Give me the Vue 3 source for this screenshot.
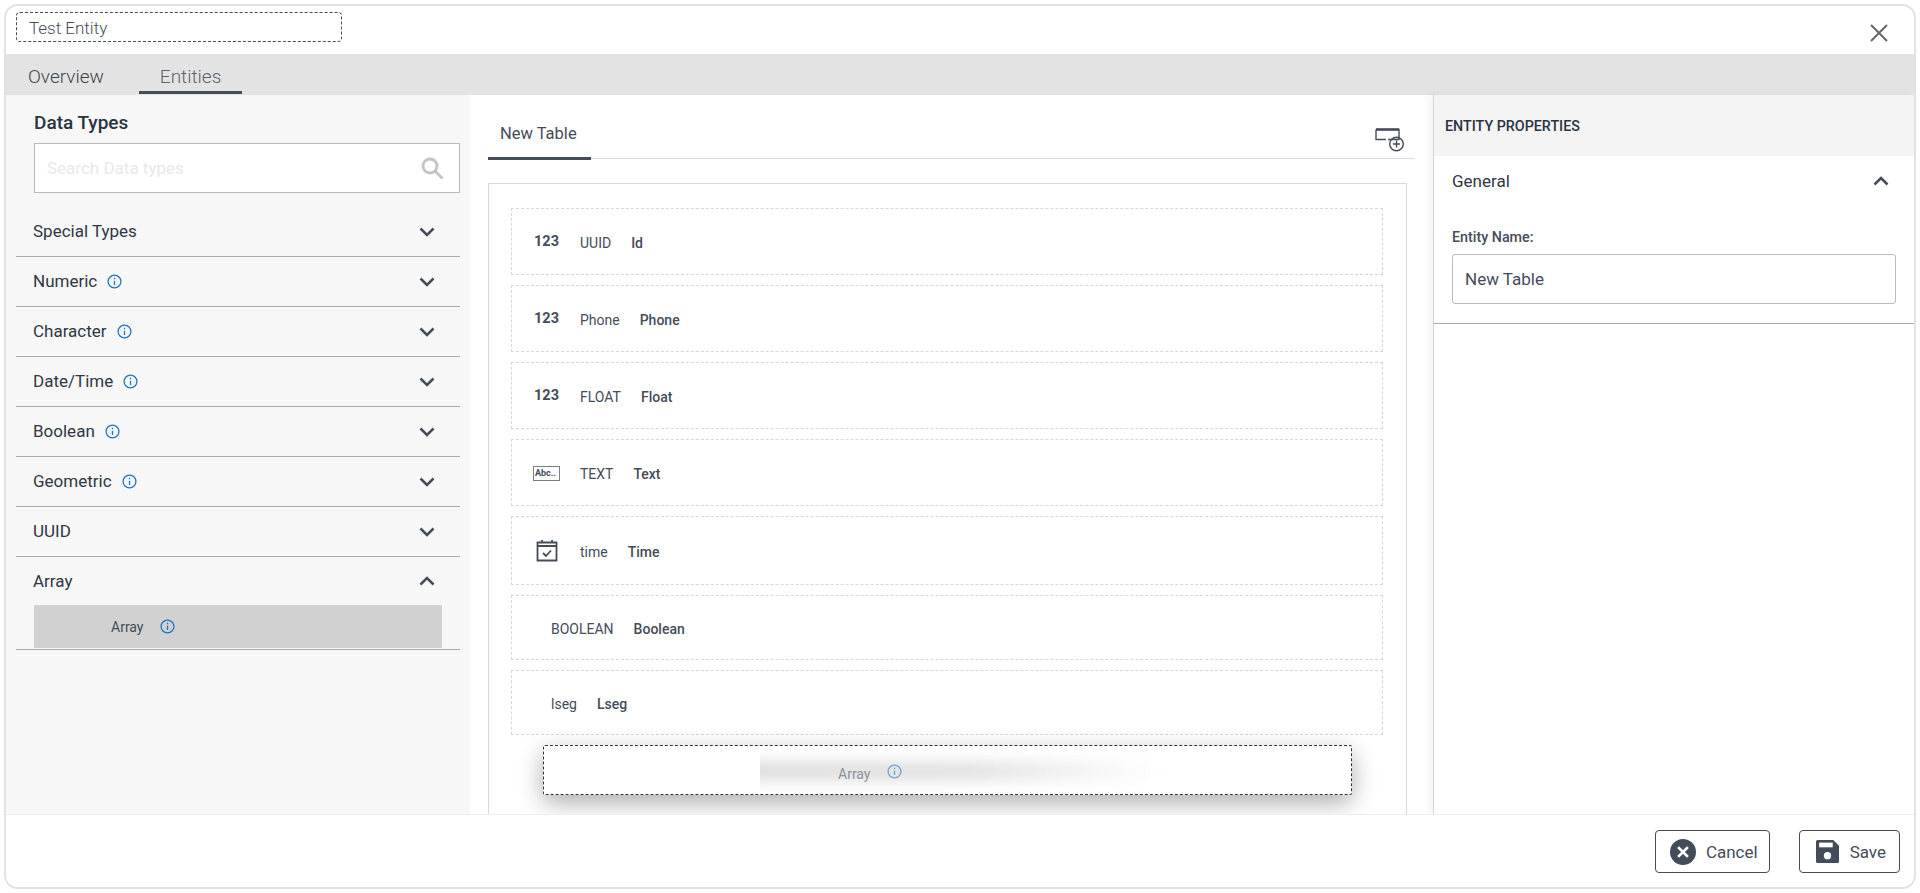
<script setup>
const groups = [
  { name: 'Special Types' },
  { name: 'Numeric', info: true },
  { name: 'Character', info: true },
  { name: 'Date/Time', info: true },
  { name: 'Boolean', info: true },
  { name: 'Geometric', info: true },
  { name: 'UUID' },
]

const fields = [
  { icon: 'num', type: 'UUID', name: 'Id', height: 67 },
  { icon: 'num', type: 'Phone', name: 'Phone', height: 67 },
  { icon: 'num', type: 'FLOAT', name: 'Float', height: 67 },
  { icon: 'text', type: 'TEXT', name: 'Text', height: 67 },
  { icon: 'date', type: 'time', name: 'Time', height: 69 },
  { type: 'BOOLEAN', name: 'Boolean', height: 65 },
  { type: 'lseg', name: 'Lseg', height: 65 },
]
</script>

<template>
  <div class="dialog">
    <header class="top">
      <div class="title-box">Test Entity</div>
      <svg class="close" viewBox="0 0 18 18" width="18" height="18">
        <path d="M1 1l16 16M17 1L1 17" />
      </svg>
    </header>

    <nav class="tabs">
      <span class="tab">Overview</span>
      <span class="tab active">Entities</span>
    </nav>

    <div class="body">
      <aside class="types">
        <h2>Data Types</h2>
        <div class="search">
          <span>Search Data types</span>
          <svg viewBox="0 0 24 24" width="24" height="24">
            <circle cx="10" cy="10" r="7" />
            <path d="M15 15l7.500 7.500" />
          </svg>
        </div>
        <div v-for="g in groups" :key="g.name" class="group">
          <span class="group-name">{{ g.name }}</span>
          <svg v-if="g.info" class="info" viewBox="0 0 14 14" width="15" height="15">
            <circle cx="7" cy="7" r="6" />
            <path d="M7 6.200v4M7 3.600v1.300" />
          </svg>
          <svg class="chev" viewBox="0 0 16 10" width="16" height="10">
            <path d="M1.500 1.500L8 8l6.500-6.500" />
          </svg>
        </div>
        <div class="group open">
          <span class="group-name">Array</span>
          <svg class="chev" viewBox="0 0 16 10" width="16" height="10">
            <path d="M1.500 8.500L8 2l6.500 6.500" />
          </svg>
        </div>
        <div class="group-items">
          <div class="item">
            <span>Array</span>
            <svg class="info" viewBox="0 0 14 14" width="15" height="15">
              <circle cx="7" cy="7" r="6" />
              <path d="M7 6.200v4M7 3.600v1.300" />
            </svg>
          </div>
        </div>
      </aside>

      <main class="canvas">
        <div class="table-tabs">
          <span class="table-tab">New Table</span>
          <svg class="add-table" viewBox="0 0 29 24" width="29" height="24">
            <path class="box" d="M1 1.500h23v10H13M1 1.500v10h10" />
            <path class="thick" d="M1 1.500h23" />
            <circle cx="21.500" cy="16" r="6.800" />
            <path d="M21.500 12.400v7.200M17.900 16h7.200" />
          </svg>
        </div>

        <div class="table">
          <div
            v-for="f in fields"
            :key="f.name"
            class="field"
            :class="{ plain: !f.icon }"
            :style="{ height: f.height + 'px' }"
          >
            <span v-if="f.icon === 'num'" class="field-icon num">123</span>
            <span v-else-if="f.icon === 'text'" class="field-icon">
              <span class="abc">Abc..</span>
            </span>
            <span v-else-if="f.icon === 'date'" class="field-icon">
              <svg viewBox="0 0 22 23" width="22" height="23" class="cal">
                <path d="M1.500 3.500h19v18h-19zM1.500 7h19M6 1v3.500M16 1v3.500" />
                <path d="M7 14l3 3 5-5.500" />
              </svg>
            </span>
            <span class="field-type">{{ f.type }}</span>
            <span class="field-name">{{ f.name }}</span>
          </div>
        </div>

        <div class="drag">
          <div class="drag-ghost"><i></i></div>
          <span class="drag-label">Array</span>
          <svg class="info" viewBox="0 0 14 14" width="15" height="15">
            <circle cx="7" cy="7" r="6" />
            <path d="M7 6.200v4M7 3.600v1.300" />
          </svg>
        </div>
      </main>

      <aside class="props">
        <div class="props-head">ENTITY PROPERTIES</div>
        <section class="props-section">
          <div class="props-title">
            <span>General</span>
            <svg class="chev" viewBox="0 0 16 10" width="16" height="10">
              <path d="M1.500 8.500L8 2l6.500 6.500" />
            </svg>
          </div>
          <label>Entity Name:</label>
          <div class="input">New Table</div>
        </section>
      </aside>
    </div>

    <footer class="foot">
      <button class="btn cancel">
        <svg viewBox="0 0 24 24" width="26" height="26">
          <circle cx="12" cy="12" r="12" fill="#444c59" />
          <path d="M7.500 7.500l9 9M16.500 7.500l-9 9" stroke="#fff" stroke-width="2.600" fill="none" />
        </svg>
        Cancel
      </button>
      <button class="btn save">
        <svg viewBox="0 0 22 22" width="23" height="23">
          <path d="M1.500 0h15L22 5.500V20.500A1.500 1.500 0 0 1 20.500 22h-19A1.500 1.500 0 0 1 0 20.500V1.500A1.500 1.500 0 0 1 1.500 0z" fill="#444c59" />
          <rect x="3" y="2.500" width="13" height="4.500" fill="#fff" />
          <circle cx="11" cy="15" r="3.500" fill="#fff" />
        </svg>
        Save
      </button>
    </footer>
  </div>
</template>

<style>
html,
body {
  margin: 0;
  background: #fff;
}
</style>

<style scoped>
.dialog {
  box-sizing: border-box;
  height: 885px;
  margin: 4px;
  border: 2px solid #e2e2e2;
  border-radius: 14px;
  display: flex;
  flex-direction: column;
  overflow: hidden;
  background: #fff;
  font-family: Roboto, "Liberation Sans", sans-serif;
  color: #444c59;
}

.top {
  height: 48px;
  flex: none;
  display: flex;
  align-items: center;
  justify-content: space-between;
  padding: 0 26px 0 10px;
}

.title-box {
  box-sizing: border-box;
  width: 326px;
  height: 30px;
  margin-top: -6px;
  padding-left: 12px;
  border: 1px dashed #444c59;
  border-radius: 4px;
  font-size: 17px;
  font-weight: 300;
  line-height: 31px;
}

.close {
  margin-top: 6px;
}

.close path {
  stroke: #666;
  stroke-width: 2;
  fill: none;
}

.tabs {
  height: 41px;
  flex: none;
  background: #e3e3e3;
  display: flex;
}

.tab {
  box-sizing: border-box;
  height: 40px;
  padding: 11px 22px 0;
  font-size: 19px;
  font-weight: 300;
  color: #3d4450;
  border-bottom: 3px solid transparent;
}

.tab.active {
  margin-left: 13px;
  padding: 11px 21px 0;
  color: #5a626e;
  border-bottom-color: #444c59;
}

.body {
  flex: 1;
  min-height: 0;
  display: flex;
}

.types {
  box-sizing: border-box;
  width: 464px;
  flex: none;
  background: #f7f7f7;
  padding: 0 10px;
}

.types h2 {
  margin: 0;
  padding: 16px 0 0 18px;
  height: 48px;
  box-sizing: border-box;
  font-size: 19px;
  font-weight: 500;
  color: #2a3342;
}

.search {
  box-sizing: border-box;
  height: 50px;
  margin: 0 0 14px 18px;
  padding: 0 15px 0 12px;
  background: #fff;
  border: 1.5px solid #bbb;
  display: flex;
  align-items: center;
  justify-content: space-between;
  font-size: 17px;
  color: #e8e8e8;
}

.search svg {
  fill: none;
  stroke: #c4c4c4;
  stroke-width: 2.8;
}

.group {
  box-sizing: border-box;
  height: 50px;
  padding: 0 25px 0 17px;
  display: flex;
  align-items: center;
  gap: 10px;
  border-bottom: 1.5px solid #aaa;
  font-size: 17px;
  color: #2f3744;
}

.group.open {
  height: 48px;
  border-bottom: 0;
}

.group-name {
  line-height: 20px;
  margin-top: -1px;
}

.chev {
  margin-left: auto;
  fill: none;
  stroke: #444c59;
  stroke-width: 2.5;
}

.info {
  flex: none;
  fill: none;
  stroke: #1b75c4;
  stroke-width: 1.2;
}

.group-items {
  height: 44px;
  border-bottom: 1.5px solid #aaa;
}

.item {
  box-sizing: border-box;
  height: 43px;
  margin: 0 18px;
  padding-left: 77px;
  background: #d1d1d1;
  display: flex;
  align-items: center;
  gap: 17px;
  font-size: 14px;
}

.canvas {
  flex: 1;
  min-width: 0;
  position: relative;
  overflow: hidden;
  padding: 0 18px;
}

.table-tabs {
  height: 63px;
  position: relative;
  display: flex;
  align-items: flex-end;
  justify-content: space-between;
  border-bottom: 1.5px solid #ddd;
}

.table-tab {
  box-sizing: border-box;
  width: 103px;
  height: 39px;
  padding: 3px 0 0 12px;
  border-bottom: 3px solid #444c59;
  margin-bottom: -1.5px;
  font-size: 16.5px;
  line-height: 20px;
}

.add-table {
  position: absolute;
  right: 11px;
  top: 33px;
  fill: none;
  stroke: #444c59;
  stroke-width: 1.4;
}

.add-table .thick {
  stroke-width: 2.6;
}

.table {
  box-sizing: border-box;
  height: 640px;
  margin: 24px 8px 0 0;
  padding: 24px 23px 0 22px;
  border: 1.5px solid #d5dbe1;
  border-bottom: 0;
  display: flex;
  flex-direction: column;
  gap: 10px;
}

.field {
  box-sizing: border-box;
  flex: none;
  padding: 2px 0 0 22px;
  border: 1px dashed #d4d8dc;
  display: flex;
  align-items: center;
  font-size: 14px;
}

.field.plain {
  padding-left: 39px;
}

.field-icon {
  width: 46px;
  flex: none;
  display: flex;
}

.num {
  font-size: 14.5px;
  font-weight: 700;
  margin-top: -3px;
}

.abc {
  box-sizing: border-box;
  width: 27px;
  height: 15px;
  margin-left: -1px;
  border: 1.5px solid #7a7f86;
  font-size: 9px;
  font-weight: 700;
  line-height: 12px;
  padding-left: 1px;
  white-space: nowrap;
  overflow: hidden;
}

.cal {
  fill: none;
  stroke: #444c59;
  stroke-width: 1.8;
  margin: -2px 0 0 2px;
}

.field-type {
  margin-right: 20px;
}

.field-name {
  font-weight: 500;
}

.drag {
  box-sizing: border-box;
  position: absolute;
  left: 73px;
  top: 650px;
  width: 809px;
  height: 50px;
  padding-left: 294px;
  background: #fff;
  border: 1px dashed #333;
  border-radius: 2px;
  box-shadow: 0 8px 24px rgba(0, 0, 0, 0.32);
  display: flex;
  align-items: center;
  gap: 17px;
  font-size: 14px;
  overflow: hidden;
}

.drag-ghost {
  position: absolute;
  left: 216px;
  right: 0;
  top: 0;
  bottom: 0;
  overflow: hidden;
}

.drag-ghost i {
  position: absolute;
  left: -20px;
  top: 15px;
  width: 420px;
  height: 20px;
  background: linear-gradient(90deg, #dedede, #e2e2e2 55%, #fff);
  filter: blur(7px);
}

.drag-label {
  position: relative;
  color: #8b919b;
  margin-top: 8px;
}

.drag .info {
  position: relative;
  margin-top: 2px;
  opacity: 0.6;
}

.props {
  box-sizing: border-box;
  width: 481px;
  flex: none;
  border-left: 1.5px solid #d5d5d5;
  box-shadow: -4px 0 8px rgba(0, 0, 0, 0.05);
  position: relative;
}

.props-head {
  box-sizing: border-box;
  height: 61px;
  padding: 23px 0 0 11px;
  background: #f4f4f4;
  font-size: 14.3px;
  font-weight: 500;
  color: #2a3342;
}

.props-section {
  box-sizing: border-box;
  height: 168px;
  padding: 0 18px;
  border-bottom: 1.5px solid #aaa;
}

.props-title {
  height: 49px;
  display: flex;
  align-items: center;
  padding-right: 7px;
  font-size: 17px;
  color: #2f3744;
}

.props-section label {
  display: block;
  margin-top: 24px;
  font-size: 14.3px;
  font-weight: 500;
  line-height: 17px;
}

.input {
  box-sizing: border-box;
  height: 50px;
  margin-top: 8px;
  padding-left: 12px;
  border: 1.5px solid #bbb;
  border-radius: 3px;
  font-size: 17px;
  line-height: 49px;
}

.foot {
  height: 73px;
  flex: none;
  position: relative;
  background: #fff;
  border-top: 1.5px solid #eee;
  display: flex;
  justify-content: flex-end;
  align-items: flex-start;
  gap: 29px;
  padding: 15px 14px 0 0;
  box-sizing: border-box;
}

.btn {
  box-sizing: border-box;
  height: 43px;
  background: #fff;
  border: 1.5px solid #444c59;
  border-radius: 4px;
  display: flex;
  align-items: center;
  gap: 10px;
  padding: 0 11px 0 14px;
  font-family: inherit;
  font-size: 17px;
  color: #444c59;
}

.save {
  gap: 11px;
  padding: 0 13px 0 16px;
}
</style>
